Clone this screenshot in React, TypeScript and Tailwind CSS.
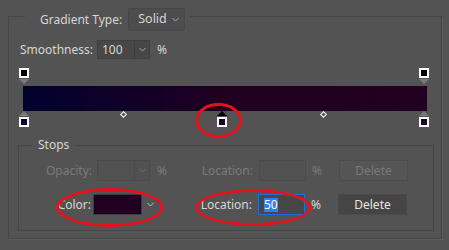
import React from "react";

const Chevron = ({ className = "" }: { className?: string }) => (
  <svg width="7" height="5" viewBox="0 0 7 5" className={className}>
    <path d="M0.5 1 L3.5 4 L6.5 1" fill="none" stroke="currentColor" strokeWidth="1" />
  </svg>
);

// one gradient stop: square with a little triangle pointing at the bar
const Stop = ({ x, top, fill, tri }: { x: number; top: boolean; fill: string; tri: string }) => (
  <div className="absolute flex flex-col items-center" style={{ left: x - 5, top: top ? 2 : 45 }}>
    {!top && (
      <div
        className="h-0 w-0 border-x-[5px] border-b-[5px] border-x-transparent"
        style={{ borderBottomColor: tri }}
      />
    )}
    <div className={"h-[10px] w-[10px] border-2 border-white " + (top ? "" : "mt-[1px]")} style={{ background: fill }} />
    {top && (
      <div
        className="mt-[1px] h-0 w-0 border-x-[5px] border-t-[5px] border-x-transparent"
        style={{ borderTopColor: tri }}
      />
    )}
  </div>
);

const Diamond = ({ x }: { x: number }) => (
  <div
    className="absolute h-[5px] w-[5px] rotate-45 border border-white"
    style={{ left: x - 2.5, top: 46 }}
  />
);

const Ellipse = ({ x, y, w, h }: { x: number; y: number; w: number; h: number }) => (
  <div
    className="pointer-events-none absolute rounded-[50%] border-[3px] border-[#e5121c]"
    style={{ left: x, top: y, width: w, height: h }}
  />
);

export default function App() {
  return (
    <div
      className="relative h-[250px] w-[449px] overflow-hidden bg-[#535353] pt-[16px] pl-[8px] text-[12px] leading-none whitespace-nowrap text-[#d6d6d6]"
      style={{ fontFamily: '"Noto Sans", "Open Sans", sans-serif' }}
    >
      <div className="h-[223px] w-[434px] border border-[#454545] shadow-[1px_1px_0_#5c5c5c]">
        {/* header */}
        <div className="-mt-[9px] ml-[16px] flex w-fit items-center gap-[6px] bg-[#535353] pl-[15px] pr-[5px]">
          <span>Gradient Type:</span>
          <div className="flex h-[23px] w-[57px] items-center justify-between rounded-[2px] border border-[#474747] bg-[#4d4d4d] pl-[9px] pr-[5px]">
            <span className="text-[12.5px]">Solid</span>
            <Chevron className="text-[#b0b0b0]" />
          </div>
        </div>

        {/* smoothness */}
        <div className="mt-[9px] flex items-center pl-[11px]">
          <span className="w-[77px]">Smoothness:</span>
          <div className="flex h-[19px] w-[53px] items-center border border-[#404040] bg-[#474747]">
            <span className="w-[36px] pl-[4px]">100</span>
            <div className="flex h-full flex-1 items-center justify-center border-l border-[#3c3c3c]">
              <Chevron className="text-[#a8a8a8]" />
            </div>
          </div>
          <span className="ml-[7px]">%</span>
        </div>

        {/* gradient slider */}
        <div className="relative mt-[7px] ml-[14px] h-[62px] w-[404px] pt-[20px]">
          <div
            className="h-[25px] w-full"
            style={{ background: "linear-gradient(to right, #01012f 0%, #1f0020 50%, #210020 100%)" }}
          />
          <Stop x={1} top fill="#000" tri="#7b7b7b" />
          <Stop x={401} top fill="#000" tri="#7b7b7b" />
          <Stop x={1} top={false} fill="#01012f" tri="#7b7b7b" />
          <Stop x={199} top={false} fill="#1f0020" tri="#000" />
          <Stop x={401} top={false} fill="#210020" tri="#7b7b7b" />
          <Diamond x={100} />
          <Diamond x={300} />
        </div>

        {/* stops box */}
        <div className="mt-[17px] ml-[9px] h-[86px] w-[416px] border border-[#454545]">
          <div className="-mt-[7px] ml-[13px] w-fit bg-[#535353] px-[6px]">Stops</div>
          <div className="mt-[9px] flex h-[21px] items-center text-[#7a7a7a]">
            <span className="w-[73px] text-right">Opacity:</span>
            <div className="ml-[5px] flex h-[21px] w-[53px] border border-[#4a4a4a] bg-[#515151]">
              <div className="w-[36px]" />
              <div className="flex flex-1 items-center justify-center border-l border-[#4a4a4a]">
                <Chevron className="text-[#6e6e6e]" />
              </div>
            </div>
            <span className="ml-[7px] w-[10px]">%</span>
            <span className="w-[86px] text-right">Location:</span>
            <div className="ml-[6px] h-[21px] w-[47px] border border-[#4a4a4a] bg-[#515151]" />
            <span className="ml-[6px] w-[11px]">%</span>
            <div className="ml-[16px] flex h-[21px] w-[69px] items-center justify-center border border-[#4c4c4c] bg-[#555555]">
              Delete
            </div>
          </div>
          <div className="mt-[13px] flex h-[21px] items-center">
            <span className="w-[72px] text-right">Color:</span>
            <div className="ml-[2px] h-[21px] w-[49px] border border-[#3d3d3d] bg-[#1f0020]" />
            <Chevron className="ml-[5px] text-[#c0c0c0]" />
            <span className="w-[98px] text-right">Location:</span>
            <div className="ml-[6px] flex h-[21px] w-[47px] items-center border border-[#1e6fd9] bg-[#474747] pl-[5px]">
              <span className="bg-[#2f7ff0] py-[1px] text-white">50</span>
            </div>
            <span className="ml-[6px] w-[11px]">%</span>
            <div className="ml-[16px] flex h-[21px] w-[69px] items-center justify-center border border-[#4a4a4a] bg-[#454545] text-[#e6e6e6]">
              Delete
            </div>
          </div>
        </div>
      </div>

      <Ellipse x={195} y={103} w={47} h={35} />
      <Ellipse x={56} y={188} w={107} h={39} />
      <Ellipse x={195} y={189} w={116} h={37} />
    </div>
  );
}
